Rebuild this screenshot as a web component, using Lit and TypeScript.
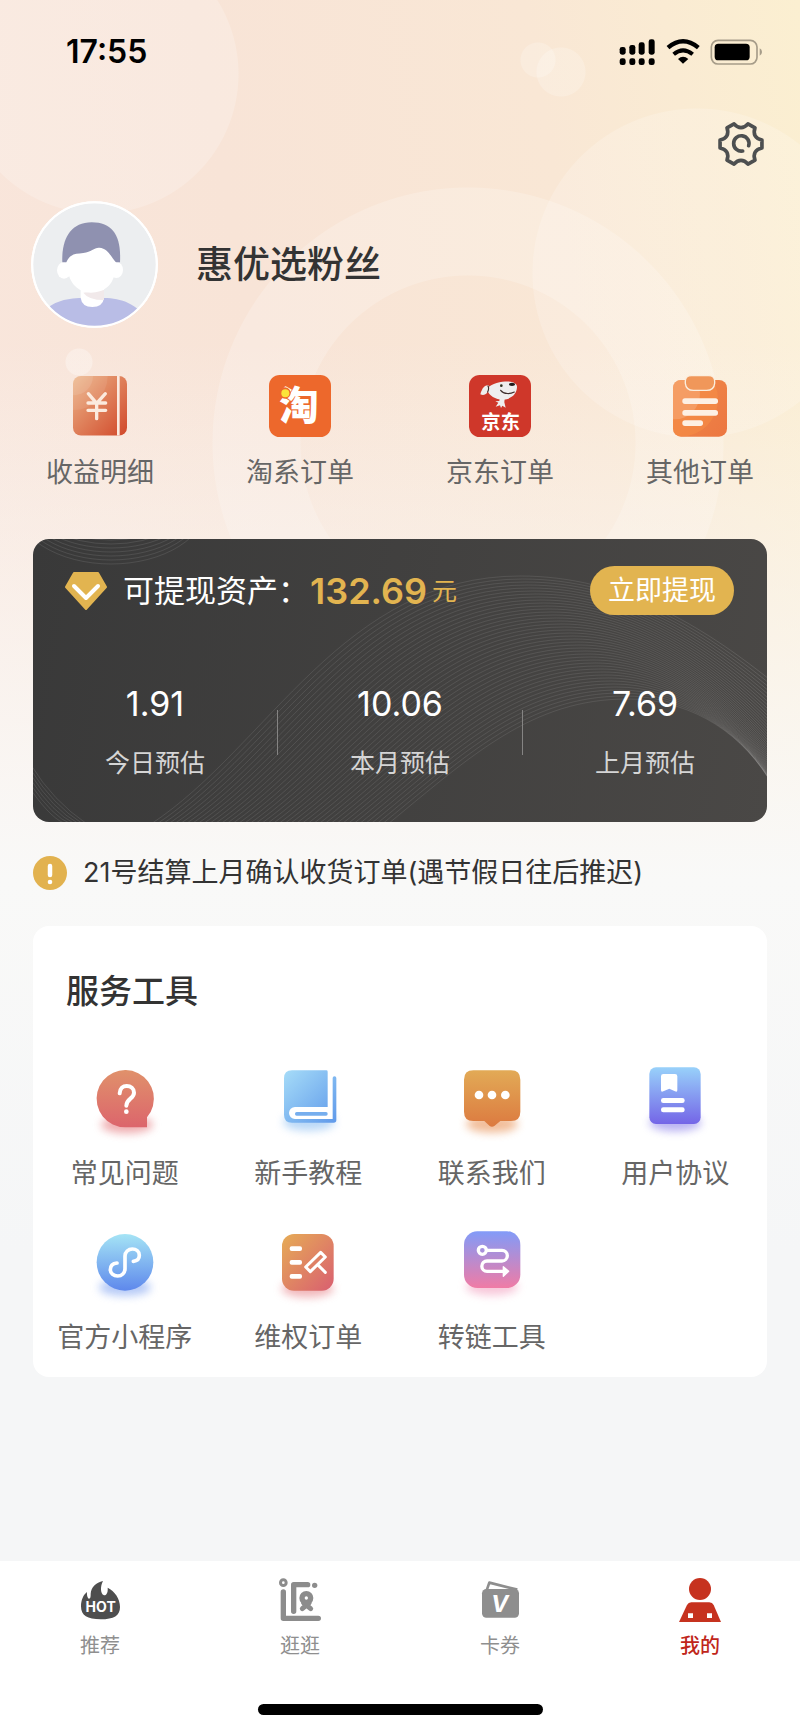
import { LitElement, html, css, svg } from "lit";
import { customElement } from "lit/decorators.js";
import { classMap } from "lit/directives/class-map.js";

const gradient = (id: string, from: string, to: string, diagonal = false) => svg`
  <linearGradient id=${id} x1="0" y1="0" x2=${diagonal ? 1 : 0} y2="1">
    <stop offset="0" stop-color=${from} /><stop offset="1" stop-color=${to} />
  </linearGradient>`;

const glow = (id: string, cx: number, cy: number, color: string) => svg`
  <filter id=${id} x="-50%" y="-150%" width="200%" height="400%"><feGaussianBlur stdDeviation="13" /></filter>
  <ellipse cx=${cx} cy=${cy} rx="78" ry="26" fill=${color} opacity=".62" filter="url(#${id})" />`;

/* ---------- status bar ---------- */
const signalIcon = svg`<svg class="signal" viewBox="58 50 111 84" aria-hidden="true">
  ${[[60, 77], [89, 71], [117, 63], [147, 54]].map(([x, y]) => svg`
    <rect x=${x} y=${y} width="18" height=${100 - y} rx="7" />
    <rect x=${x} y="111" width="18" height="20" rx="7" />`)}
</svg>`;
const wifiIcon = svg`<svg class="wifi" viewBox="198 50 102 84" aria-hidden="true">
  <g fill="none" stroke="#000"><path d="M204 79Q249 41 295 79" stroke-width="13" /><path d="M221 99Q249 75 278 99" stroke-width="12" /></g>
  <path d="M234 113Q249 99 265 113L249 127Z" />
</svg>`;
const batteryIcon = svg`<svg class="battery" viewBox="331 50 159 84" aria-hidden="true">
  <rect x="335" y="57" width="137" height="71" rx="20" fill="none" stroke="#a69c89" stroke-width="5" />
  <rect x="345" y="67" width="105" height="50" rx="11" /><path d="M480 81q7 3 7 11t-7 11z" fill="#a69c89" />
</svg>`;

/* ---------- settings gear: six lobes joined by curved dips ---------- */
const gearPath = (() => {
  const at = (deg: number, r: number) => {
    const a = (deg * Math.PI) / 180;
    return `${(72 + r * Math.cos(a)).toFixed(1)} ${(72 + r * Math.sin(a)).toFixed(1)}`;
  };
  let d = `M${at(-11, 64)}`;
  for (let k = 0; k < 6; k++) {
    const a = k * 60;
    d += `L${at(a + 11, 64)}C${at(a + 20, 46)} ${at(a + 40, 46)} ${at(a + 49, 64)}`;
  }
  return d + "Z";
})();
const gearIcon = svg`<svg class="gear" viewBox="0 0 144 144" fill="none" stroke="#4d4f50" stroke-width="11" stroke-linejoin="round" stroke-linecap="round" aria-hidden="true">
  <path d=${gearPath} /><path d="M95 77A23 23 0 1 0 77 93" />
</svg>`;

const avatar = svg`<svg class="avatar" viewBox="33 33 381 381" role="img" aria-label="头像">
  <clipPath id="face"><circle cx="223.5" cy="223.5" r="186" /></clipPath>
  <circle cx="223.5" cy="223.5" r="190" fill="#fff" />
  <g clip-path="url(#face)">
    <circle cx="223.5" cy="223.5" r="184" fill="#eceef0" />
    <path d="M76 360C115 322 170 323 223 323S325 325 368 370V420H76Z" fill="#b9bde6" />
    <path d="M182 296H252V324Q248 351 217 351T182 324Z" fill="#fff" />
    <path d="M190 308Q205 330 252 330V300Z" fill="#f1e9ea" />
    <ellipse cx="132" cy="241" rx="21" ry="25" fill="#fff" /><ellipse cx="289" cy="240" rx="20" ry="24" fill="#fff" />
    <path d="M127 217C124 150 150 97 215 97S304 140 300 217Z" fill="#8f91b0" />
    <path d="M138 220C150 190 165 192 190 189S222 172 238 173C265 175 270 198 289 218L284 240C284 285 250 308 213 308S146 280 143 235Z" fill="#fff" />
  </g>
  <circle cx="223.5" cy="223.5" r="187" fill="none" stroke="#fff" stroke-width="6" />
</svg>`;

/* ---------- order shortcuts ---------- */
const incomeIcon = svg`<svg class="quick-icon" viewBox="87 45 186 186" aria-hidden="true">
  <defs>${gradient("in", "#ecb588", "#d1482a", true)}</defs>
  <clipPath id="inc"><rect x="99" y="48" width="162" height="179" rx="24" /></clipPath>
  <g clip-path="url(#inc)">
    <rect x="99" y="48" width="162" height="179" fill="url(#in)" />
    <circle cx="101" cy="48" r="102" fill="#fff" opacity=".08" /><circle cx="101" cy="48" r="58" fill="#fff" opacity=".1" />
    <rect x="231" y="48" width="8" height="179" fill="#fbeae0" />
  </g>
  <path d="M145 101L170 130L196 101M170 130V176M144 129H197M144 151H197" fill="none" stroke="#fbeade" stroke-width="10" stroke-linecap="round" stroke-linejoin="round" />
</svg>`;
const taoIcon = svg`<svg class="quick-icon" viewBox="687 45 186 186" aria-hidden="true">
  <rect x="687" y="45" width="186" height="186" rx="32" fill="#ed682c" />
  <text class="mark heavy" x="777" y="180" font-size="118" text-anchor="middle">淘</text>
  <circle cx="735" cy="99" r="17" fill="#ed682c" /><circle cx="736" cy="100" r="12" fill="#fbe33a" />
</svg>`;
const jdIcon = svg`<svg class="quick-icon" viewBox="87 45 186 186" aria-hidden="true">
  <rect x="87" y="45" width="186" height="186" rx="32" fill="#cf372a" />
  <g fill="#efeeee">
    <path d="M141 86C155 68 188 64 205 64.500C222 66 232 72 231 82C230 102 215 117 190 119C165 119 148 107 141 90Z" />
    <path d="M146 76C132 74 124 90 121 103C133 108 143 102 145 88Z" />
    <path d="M179 116H194L193 127L197 143L187 137L183 144L180 136L167 140L175 128L166 124L178 123Z" />
  </g>
  <path d="M182 91C192 104 212 102 223 96M144 78Q148 86 143 96" fill="none" stroke="#40302e" stroke-width="3.500" stroke-linecap="round" />
  <circle cx="184" cy="77" r="4" fill="#332" /><ellipse cx="216" cy="73" rx="9" ry="5" fill="#221a1a" />
  <text class="mark bold" x="182" y="207" font-size="58" text-anchor="middle">京东</text>
</svg>`;
const otherIcon = svg`<svg class="quick-icon" viewBox="687 45 186 186" aria-hidden="true">
  <defs>${gradient("ot", "#f08a4a", "#ec7741", true)}</defs>
  <clipPath id="otc"><rect x="699" y="60" width="162" height="170" rx="24" /></clipPath>
  <rect x="699" y="60" width="162" height="170" rx="24" fill="url(#ot)" />
  <g clip-path="url(#otc)"><circle cx="722" cy="118" r="112" fill="#f78f45" opacity=".5" /><circle cx="704" cy="102" r="76" fill="#fff" opacity=".16" /></g>
  <path d="M754 47H806Q824 47 824 64V70Q822 91 800 91H760Q738 91 736 70V64Q736 47 754 47Z" fill="#f0975a" stroke="#fbeede" stroke-width="4" />
  <g fill="#fdf0e4"><rect x="727" y="115" width="107" height="17" rx="8" /><rect x="727" y="150" width="107" height="17" rx="8" /><rect x="727" y="181" width="62" height="17" rx="8" /></g>
</svg>`;

/* ---------- service tools ---------- */
const faqIcon = svg`<svg class="tool-icon" viewBox="134 66 240 240" aria-hidden="true">
  <defs>${gradient("faq", "#e0916b", "#dc656c")}</defs>${glow("faqg", 260, 254, "#e57b80")}
  <path d="M320 232V262H255A86 86 0 1 1 320 232Z" fill="url(#faq)" />
  <path d="M238 160C239 145 248 138 259 138C271 138 281 146 281 158C281 176 258 176 258 197" fill="none" stroke="#fff" stroke-width="12" stroke-linecap="round" />
  <circle cx="258" cy="215" r="7" fill="#fff" />
</svg>`;
const bookIcon = svg`<svg class="tool-icon" viewBox="685 66 240 240" aria-hidden="true">
  <defs>${gradient("bk", "#a6dcf8", "#5f99ea", true)}</defs>${glow("bkg", 808, 246, "#8fc0f2")}
  <rect x="745" y="110" width="136" height="130" fill="#fff" />
  <path d="M860 91H757Q733 91 733 115V224Q733 248 757 248H882Q890 248 890 240V114A5.500 5.500 0 0 0 879 114V237H766A18 18 0 0 1 766 201H864V95Q864 91 860 91Z" fill="url(#bk)" />
  <rect x="766" y="216" width="98" height="11" rx="5" fill="#76aeee" />
</svg>`;
const chatIcon = svg`<svg class="tool-icon" viewBox="125 66 240 240" aria-hidden="true">
  <defs>${gradient("ch", "#e2aa56", "#dc7a40")}</defs>${glow("chg", 245, 252, "#e9945a")}
  <path d="M189 91H302Q330 91 330 119V215Q330 243 302 243H270L252 258Q245 263 238 258L222 243H189Q161 243 161 215V119Q161 91 189 91Z" fill="url(#ch)" />
  <g fill="#fff"><circle cx="206" cy="165" r="13" /><circle cx="245" cy="165" r="13" /><circle cx="285" cy="165" r="13" /></g>
</svg>`;
const agreementIcon = svg`<svg class="tool-icon" viewBox="676 66 240 240" aria-hidden="true">
  <defs>${gradient("ag", "#98d1fa", "#7465e7")}</defs>${glow("agg", 797, 248, "#8f84ea")}
  <rect x="719" y="82" width="154" height="170" rx="20" fill="url(#ag)" />
  <g fill="#fff"><path d="M754 109Q754 102 761 102H796Q803 102 803 109V150Q803 158 796 154L779 146L761 154Q754 158 754 150Z" />
  <rect x="754" y="174" width="71" height="15" rx="7" /><rect x="754" y="202" width="71" height="15" rx="7" /></g>
</svg>`;
const miniIcon = svg`<svg class="tool-icon" viewBox="134 558 240 240" aria-hidden="true">
  <defs>${gradient("mi", "#a5e4f5", "#5e88ec")}</defs>${glow("mig", 254, 742, "#88a9f2")}
  <circle cx="254" cy="667" r="85" fill="url(#mi)" />
  <path d="M279 664C292 663 297 655 297 646C297 634 287 627 276 627C264 627 254 636 254 648V686C254 699 244 708 232 708C219 708 210 699 210 689C210 676 219 670 230 669" fill="none" stroke="#fff" stroke-width="11" stroke-linecap="round" />
</svg>`;
const rightsIcon = svg`<svg class="tool-icon" viewBox="685 558 240 240" aria-hidden="true">
  <defs>${gradient("ri", "#e6ac56", "#d95f70", true)}</defs>${glow("rig", 804, 746, "#e88a90")}
  <rect x="727" y="582" width="155" height="170" rx="36" fill="url(#ri)" />
  <g fill="#fff"><rect x="750" y="619" width="37" height="14" rx="6" /><rect x="750" y="660" width="37" height="14" rx="6" /><rect x="750" y="702" width="37" height="14" rx="6" /></g>
  <path d="M798 681L843 637L857 651L812 695ZM836 676L857 697" fill="none" stroke="#fff" stroke-width="9" stroke-linecap="round" stroke-linejoin="round" />
</svg>`;
const linkIcon = svg`<svg class="tool-icon" viewBox="125 558 240 240" aria-hidden="true">
  <defs>${gradient("li", "#829bf8", "#f07ba5")}</defs>${glow("lig", 245, 740, "#f3a5c2")}
  <rect x="161" y="574" width="169" height="170" rx="40" fill="url(#li)" />
  <g fill="none" stroke="#fff" stroke-width="10"><circle cx="216" cy="631" r="12" /><path d="M230 631H275A16 16 0 0 1 275 663H230A15.500 15.500 0 0 0 230 694H280" /></g>
  <path d="M279 680L295 694L279 709Z" fill="#fff" stroke="#fff" stroke-width="4" stroke-linejoin="round" />
</svg>`;

/* ---------- tab bar ---------- */
const hotIcon = svg`<svg class="tab-icon" viewBox="111 50 138 138" aria-hidden="true">
  <path d="M189 62C181 76 180 100 192 105C202 105 204 92 203 82C224 92 240 115 240 140C240 166 222 177 182 177S123 166 123 138C123 120 130 103 141 95C140 105 143 114 147 115C152 114 152 108 152 100C153 82 168 66 189 62Z" fill="#4e4e4e" />
  <text class="mark bold" x="182" y="156" font-size="42" text-anchor="middle">HOT</text>
</svg>`;
const strollIcon = svg`<svg class="tab-icon" viewBox="711 50 138 138" fill="none" stroke="#8c8c8c" stroke-linecap="round" stroke-linejoin="round" aria-hidden="true">
  <circle cx="730" cy="67" r="8.500" stroke-width="9" /><path d="M730 95V174H835" stroke-width="16" /><path d="M761 153V73H803" stroke-width="16" />
  <circle cx="824" cy="75" r="8" fill="#8c8c8c" stroke="none" /><circle cx="799" cy="113" r="13" stroke-width="16" /><path d="M787 145L807 128M812 145L791 128" stroke-width="15" />
</svg>`;
const couponIcon = svg`<svg class="tab-icon" viewBox="111 50 138 138" aria-hidden="true">
  <path d="M140 90L148 67L232 88" fill="none" stroke="#8e8e8e" stroke-width="8" stroke-linejoin="round" />
  <rect x="126" y="86" width="111" height="86" rx="13" fill="#8e8e8e" />
  <text class="mark bold slanted" x="179" y="155" font-size="70" text-anchor="middle">V</text>
</svg>`;
const mineIcon = svg`<svg class="tab-icon" viewBox="711 50 138 138" aria-hidden="true">
  <circle cx="780" cy="86" r="33" fill="#c6321f" /><path d="M741 134Q745 126 754 126H808Q817 126 821 134L843 185H717Z" fill="#c6321f" />
  <path d="M744 159h15v14h-15zM801 159h15v14h-15z" fill="#fff" />
</svg>`;

/* ---------- asset card ornament: lines blended between an upper and a lower curve ---------- */
const upperCurve = [118, 285, 235, 208, 310, 37, 487, 37, 590, 37, 670, 88, 736, 140];
const lowerCurve = [355, 285, 440, 215, 500, 160, 594, 160, 650, 160, 702, 186, 736, 240];
const waveCount = 42;
const waves = Array.from({ length: waveCount }, (_, i) => {
  const t = i / (waveCount - 1);
  const late = 1 - Math.pow(1 - t, 1.7);
  const p = upperCurve.map((v, k) => (v + (lowerCurve[k] - v) * (k > 9 ? late : t)).toFixed(1));
  return `M${p[0]} ${p[1]}C${p.slice(2, 8).join(" ")}C${p[8]} ${p[9]} ${p.slice(10).join(" ")}`;
});
const ornament = svg`<svg class="ornament" viewBox="0 0 734 283" preserveAspectRatio="none" fill="none" aria-hidden="true">
  <linearGradient id="wv" x1="0" y1="0" x2="734" y2="0" gradientUnits="userSpaceOnUse">
    <stop offset="0" stop-color="#fff" stop-opacity=".1" /><stop offset=".85" stop-color="#fff" stop-opacity=".09" /><stop offset="1" stop-color="#fff" stop-opacity=".12" />
  </linearGradient>
  <g stroke="url(#wv)">
    ${waves.map((d) => svg`<path d=${d} />`)}
    ${[0, 1, 2, 3, 4, 5].map((i) => svg`<path d="M-2 ${226 + i * 5}Q20 ${262 + i * 4} ${54 - i * 4} 285" />`)}
    ${[0, 1, 2, 3, 4, 5, 6, 7].map((i) => svg`<ellipse cx="78" cy=${-35 - i} rx=${96 - i * 3} ry=${60 - i * 3} />`)}
  </g>
</svg>`;

const diamond = svg`<svg class="diamond" viewBox="0 0 42 38" aria-hidden="true">
  <path d="M9 1H33L41 15L21 37L1 15Z" fill="#e2b450" stroke="#e2b450" stroke-width="2" stroke-linejoin="round" />
  <path d="M9 14L21 26L33 14" fill="none" stroke="#fff" stroke-width="4" stroke-linecap="round" stroke-linejoin="round" />
</svg>`;
const alertIcon = svg`<svg class="alert" viewBox="0 0 34 34" aria-hidden="true">
  <circle cx="17" cy="17" r="17" fill="#e2b24f" /><path d="M17 10V19" stroke="#fff" stroke-width="4.500" stroke-linecap="round" /><circle cx="17" cy="26" r="2.300" fill="#fff" />
</svg>`;

@customElement("app-root")
export class AppRoot extends LitElement {
  static styles = css`
    :host {
      display: flex;
      flex-direction: column;
      min-height: 100vh;
      box-sizing: border-box;
      font-family: Inter, "Noto Sans CJK SC", sans-serif;
      color: #333;
      background:
        linear-gradient(to bottom, rgba(245, 246, 246, 0) 340px, rgba(250, 249, 247, 0.7) 700px, #f9f9f8 880px, #f5f6f7 1250px),
        radial-gradient(circle at 99px 74px, rgba(255, 255, 255, 0.2) 139px, transparent 140px),
        radial-gradient(circle at 538px 60px, rgba(255, 255, 255, 0.2) 17px, transparent 18px),
        radial-gradient(circle at 561px 72px, rgba(255, 255, 255, 0.2) 24px, transparent 25px),
        radial-gradient(circle at 79px 362px, rgba(255, 255, 255, 0.3) 13px, transparent 14px),
        radial-gradient(circle at 697px 273px, rgba(255, 255, 255, 0.18) 164px, transparent 165px),
        radial-gradient(circle at 468px 443px, transparent 167px, rgba(255, 255, 255, 0.2) 168px, rgba(255, 255, 255, 0.2) 255px, transparent 256px),
        linear-gradient(80deg, #f9e7df 0%, #f8e4d7 45%, #f9e7d5 75%, #fbefd1 100%);
    }
    button, a {
      font: inherit;
      color: inherit;
      text-decoration: none;
      border: 0;
      padding: 0;
      background: none;
      cursor: pointer;
    }
    svg { display: block; flex: none; }
    .mark { fill: #fff; }
    .bold { font-weight: 700; }
    .heavy { font-weight: 900; }
    .slanted { font-style: italic; }
    .status {
      display: flex;
      align-items: center;
      justify-content: space-between;
      padding: 32px 37px 0 66px;
      height: 40px;
      color: #000;
    }
    .time { font-size: 32px; line-height: 40px; font-weight: 600; }
    .indicators { display: flex; gap: 10px; }
    .signal { width: 37px; height: 28px; }
    .wifi { width: 34px; height: 28px; }
    .battery { width: 53px; height: 28px; }
    .toolbar { display: flex; justify-content: flex-end; padding: 48px 35px 0; }
    .gear { width: 48px; height: 48px; }
    .profile { display: flex; align-items: center; gap: 38px; padding: 33px 31px 0; }
    .avatar { width: 127px; height: 127px; }
    .name { margin: 0; font-size: 37px; line-height: 48px; font-weight: 500; }
    .quick { display: grid; grid-template-columns: repeat(4, 1fr); padding-top: 47px; }
    .quick-icon { width: 62px; height: 62px; }
    .cell {
      display: flex;
      flex-direction: column;
      align-items: center;
      gap: 18px;
      font-size: 27px;
      line-height: 36px;
      color: #666;
      white-space: nowrap;
    }
    .assets {
      position: relative;
      margin: 48px 33px 0;
      padding: 27px 0 42px;
      border-radius: 16px;
      overflow: hidden;
      color: #fff;
      background: linear-gradient(100deg, #393939, #4a4846);
    }
    .ornament { position: absolute; inset: 0; width: 100%; height: 100%; }
    .balance { position: relative; display: flex; align-items: center; padding: 0 33px 0 32px; }
    .diamond { width: 42px; height: 38px; }
    .balance-label { margin-left: 16px; font-size: 31px; line-height: 48px; }
    .amount { margin-left: 1px; color: #e2b450; font-size: 36px; line-height: 48px; font-weight: 600; }
    .unit { margin-left: 5px; color: #e2b450; font-size: 25px; line-height: 48px; }
    .withdraw {
      margin-left: auto;
      padding: 0 18px;
      border-radius: 25px;
      background: #e2b450;
      color: #fff;
      font-size: 27px;
      line-height: 49px;
    }
    .stats { position: relative; display: flex; align-items: center; margin: 69px 0 0; }
    .stat { flex: 1; text-align: center; }
    .stat-value { font-size: 34px; line-height: 40px; }
    .stat-label { margin-top: 22px; font-size: 25px; line-height: 34px; color: #d5d5d5; }
    .rule { width: 1px; height: 45px; background: #858483; }
    .notice { display: flex; align-items: center; gap: 16px; margin: 34px 33px 0; font-size: 27px; line-height: 34px; }
    .alert { width: 34px; height: 34px; }
    .notice-text { margin: 0; }
    .panel { margin: 36px 33px; padding: 43px 0 21px; border-radius: 16px; background: #fff; }
    .panel-title { margin: 0 33px; font-size: 33px; line-height: 44px; font-weight: 500; }
    .tools { display: grid; grid-template-columns: repeat(4, 1fr); row-gap: 34px; margin-top: 49px; }
    .tools .cell { gap: 14px; }
    .tool-icon { width: 80px; height: 80px; overflow: visible; }
    .tabbar { margin-top: auto; padding: 16px 0; background: #fff; }
    .tabs { display: grid; grid-template-columns: repeat(4, 1fr); }
    .tab { display: flex; flex-direction: column; align-items: center; gap: 9px; font-size: 20px; line-height: 28px; color: #8f8f8f; }
    .tab.current { color: #c0261a; font-weight: 500; }
    .tab-icon { width: 46px; height: 46px; }
    .home { width: 285px; height: 11px; margin: 44px auto 0; border-radius: 6px; background: #000; }
  `;

  private quick = [
    { label: "收益明细", icon: incomeIcon },
    { label: "淘系订单", icon: taoIcon },
    { label: "京东订单", icon: jdIcon },
    { label: "其他订单", icon: otherIcon },
  ];
  private stats = [
    { value: "1.91", label: "今日预估" },
    { value: "10.06", label: "本月预估" },
    { value: "7.69", label: "上月预估" },
  ];
  private tools = [
    { label: "常见问题", icon: faqIcon },
    { label: "新手教程", icon: bookIcon },
    { label: "联系我们", icon: chatIcon },
    { label: "用户协议", icon: agreementIcon },
    { label: "官方小程序", icon: miniIcon },
    { label: "维权订单", icon: rightsIcon },
    { label: "转链工具", icon: linkIcon },
  ];
  private tabs = [
    { label: "推荐", icon: hotIcon, current: false },
    { label: "逛逛", icon: strollIcon, current: false },
    { label: "卡券", icon: couponIcon, current: false },
    { label: "我的", icon: mineIcon, current: true },
  ];

  render() {
    return html`
      <div class="status">
        <span class="time">17:55</span>
        <div class="indicators">${signalIcon}${wifiIcon}${batteryIcon}</div>
      </div>
      <div class="toolbar"><button type="button" aria-label="设置">${gearIcon}</button></div>
      <header class="profile">${avatar}<h1 class="name">惠优选粉丝</h1></header>
      <nav class="quick" aria-label="订单">
        ${this.quick.map((q) => html`<a class="cell" href="#">${q.icon}<span>${q.label}</span></a>`)}
      </nav>
      <section class="assets">
        ${ornament}
        <div class="balance">
          ${diamond}
          <span class="balance-label">可提现资产：</span>
          <span class="amount">132.69</span><span class="unit">元</span>
          <button class="withdraw" type="button">立即提现</button>
        </div>
        <div class="stats">
          ${this.stats.map((s, i) => html`
            ${i ? html`<div class="rule"></div>` : null}
            <div class="stat"><div class="stat-value">${s.value}</div><div class="stat-label">${s.label}</div></div>`)}
        </div>
      </section>
      <div class="notice">${alertIcon}<p class="notice-text">21号结算上月确认收货订单(遇节假日往后推迟)</p></div>
      <section class="panel">
        <h2 class="panel-title">服务工具</h2>
        <div class="tools">
          ${this.tools.map((t) => html`<a class="cell" href="#">${t.icon}<span>${t.label}</span></a>`)}
        </div>
      </section>
      <footer class="tabbar">
        <nav class="tabs" aria-label="主导航">
          ${this.tabs.map((t) => html`<a class=${classMap({ tab: true, current: t.current })} href="#">${t.icon}<span>${t.label}</span></a>`)}
        </nav>
        <div class="home"></div>
      </footer>
    `;
  }
}
